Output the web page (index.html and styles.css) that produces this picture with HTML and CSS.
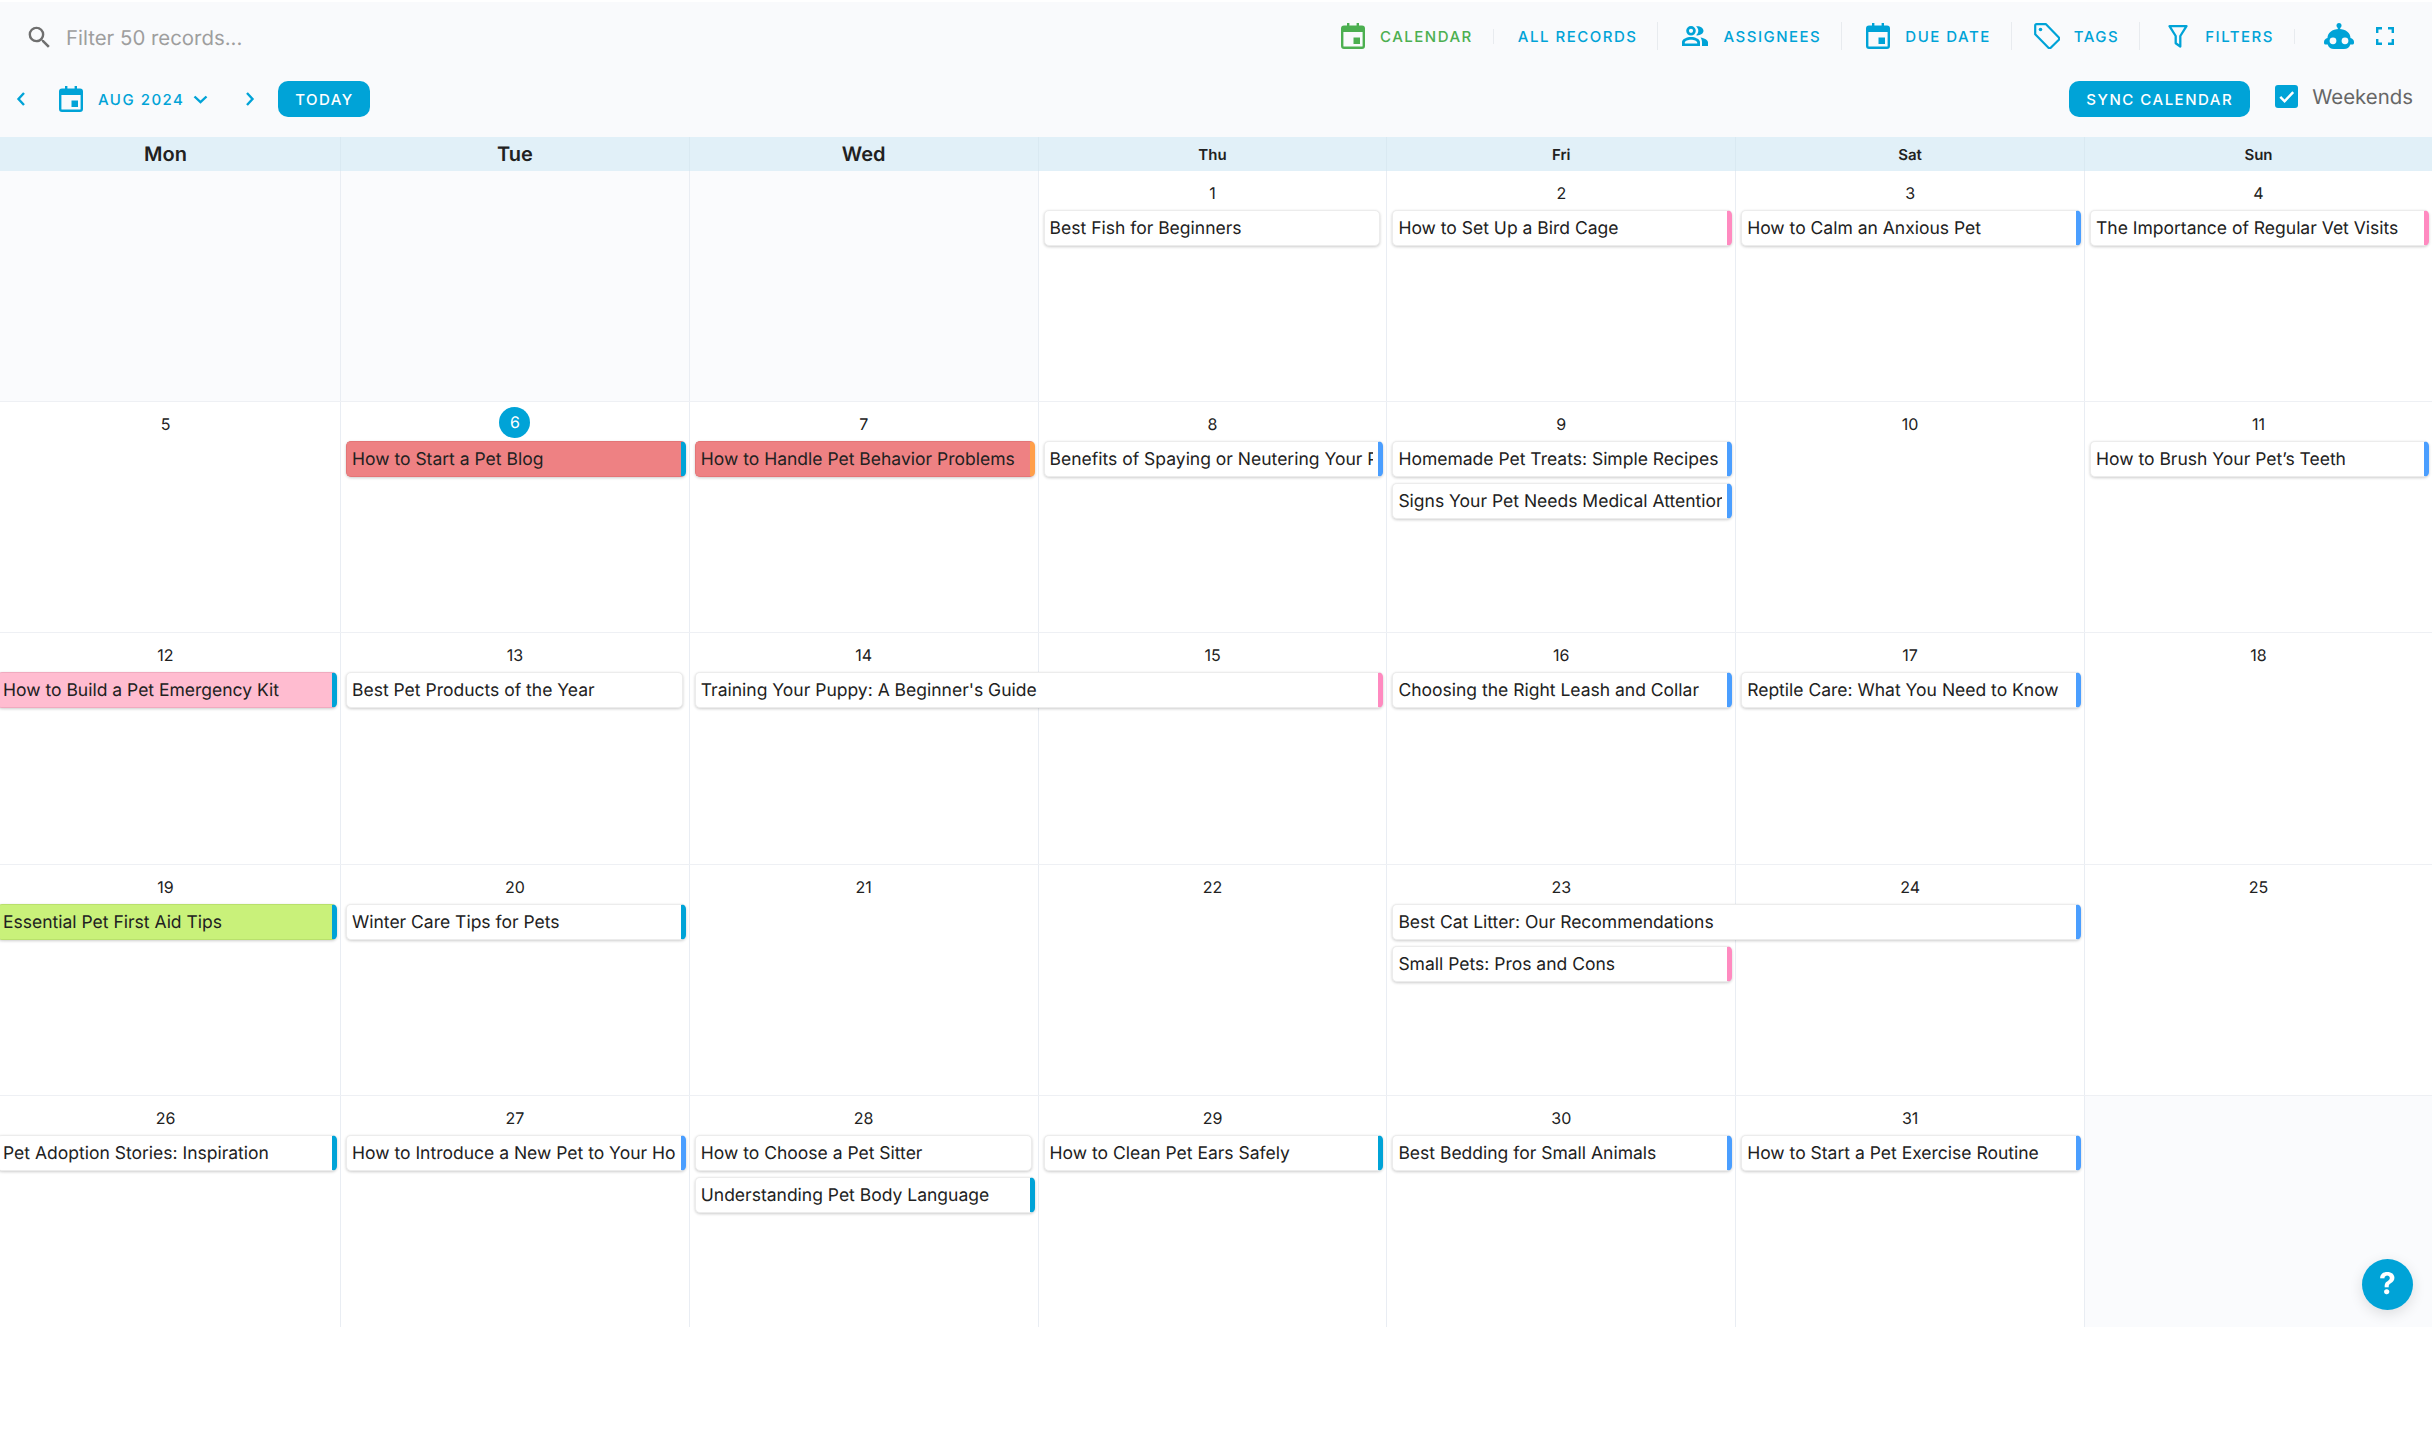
FILE: index.html
```html
<!DOCTYPE html>
<html lang="en">
<head>
  <meta charset="UTF-8">
  <title>Calendar</title>
  <link rel="stylesheet" href="styles.css">
</head>
<body>
<div class="toolbar">
  <div class="nav-row">
    <svg class="search-icon" viewBox="0 0 24 24"><path d="M15.500 14h-.79l-.28-.27A6.470 6.470 0 0 0 16 9.500 6.500 6.500 0 1 0 9.500 16c1.610 0 3.090-.59 4.230-1.570l.27.28v.79l5 4.990L20.490 19l-4.990-5zm-6 0C7.010 14 5 11.990 5 9.500S7.010 5 9.500 5 14 7.010 14 9.500 11.990 14 9.500 14z"/></svg>
    <span class="search-text">Filter 50 records...</span>
    <div class="nav-items">
      <a class="nav-item active">
        <svg class="icon-cal" viewBox="0 0 24 26"><path d="M6 0h2.400v2.600h7.200V0H18v2.600h3a3 3 0 0 1 3 3V23a3 3 0 0 1-3 3H3a3 3 0 0 1-3-3V5.600a3 3 0 0 1 3-3h3zM2.400 9v14c0 .4.200.6.600.6h18c.4 0 .6-.2.6-.6V9zM12.500 14.500H19V21h-6.500z"/></svg>
        CALENDAR
      </a>
      <span class="sep short"></span>
      <a class="nav-item">ALL RECORDS</a>
      <span class="sep"></span>
      <a class="nav-item">
        <svg class="icon-people" viewBox="0 0 26 20"><path d="M9 0a4.800 4.800 0 1 1 0 9.600A4.800 4.800 0 0 1 9 0zm0 2.700a2.100 2.100 0 1 0 0 4.200 2.100 2.100 0 0 0 0-4.200zM9 11c4 0 9 2 9 5v4H0v-4c0-3 5-5 9-5zm0 2.800c-3 0-6.200 1.400-6.200 2.600v1h12.400v-1c0-1.200-3.200-2.600-6.200-2.600zM14 .2c4-.5 7.500 1.600 7.500 4.600S18 9.800 14 9.300c1.500-1.300 2.300-2.800 2.300-4.500S15.500 1.500 14 .2zM18.500 11.500c4 .6 7.500 2.400 7.500 5V20h-6v-3.500c0-2-.6-3.700-1.500-5z"/></svg>
        ASSIGNEES
      </a>
      <span class="sep"></span>
      <a class="nav-item">
        <svg class="icon-cal" viewBox="0 0 24 26"><path d="M6 0h2.400v2.600h7.200V0H18v2.600h3a3 3 0 0 1 3 3V23a3 3 0 0 1-3 3H3a3 3 0 0 1-3-3V5.600a3 3 0 0 1 3-3h3zM2.400 9v14c0 .4.200.6.600.6h18c.4 0 .6-.2.6-.6V9zM12.500 14.500H19V21h-6.500z"/></svg>
        DUE DATE
      </a>
      <span class="sep"></span>
      <a class="nav-item">
        <svg class="icon-tag" viewBox="0 0 26 26"><path d="M2.500 1.200h9.500l12.600 13.100a2 2 0 0 1 0 2.700l-7.600 7.500a2 2 0 0 1-2.800 0L1.200 11.300V2.500c0-.8.500-1.300 1.300-1.300z" fill="none" stroke="currentColor" stroke-width="2.200" stroke-linejoin="round"/><circle cx="6.500" cy="6.500" r="1.800"/></svg>
        TAGS
      </a>
      <span class="sep"></span>
      <a class="nav-item">
        <svg class="icon-filter" viewBox="0 0 20 23"><path d="M1.500 1.200h17L12.300 11v10.500l-4.600-3.200V11z" fill="none" stroke="currentColor" stroke-width="2.300" stroke-linejoin="round"/></svg>
        FILTERS
      </a>
      <span class="sep short"></span>
      <svg class="icon-robot" viewBox="0 0 30 26"><circle cx="15" cy="2.500" r="2.500"/><path d="M13.800 4h2.400v4h-2.400z"/><path d="M15 6C8 6 3.500 10 3.500 15 1.500 15.500 0 17 0 19v1c0 .8.600 1.500 1.500 1.500h2.200C4.500 24.500 7 26 10 26h10c3 0 5.500-1.500 6.300-4.500h2.200c.9 0 1.500-.7 1.500-1.500v-1c0-2-1.500-3.500-3.500-4C26.500 10 22 6 15 6z"/><circle cx="9" cy="17.800" r="3.400" fill="#f9fafc"/><circle cx="21" cy="17.800" r="3.400" fill="#f9fafc"/></svg>
      <svg class="icon-full" viewBox="0 0 18 18"><path d="M0 0h6v2.400H2.400V6H0zM12 0h6v6h-2.400V2.400H12zM0 12h2.400v3.600H6V18H0zM15.600 12H18v6h-6v-2.400h3.600z"/></svg>
    </div>
  </div>
  <div class="date-row">
    <svg class="chev-prev" viewBox="0 0 10 14"><path d="M8 1 2.500 7 8 13" fill="none" stroke="currentColor" stroke-width="2.400"/></svg>
    <svg class="icon-cal month-cal" viewBox="0 0 24 26"><path d="M6 0h2.400v2.600h7.200V0H18v2.600h3a3 3 0 0 1 3 3V23a3 3 0 0 1-3 3H3a3 3 0 0 1-3-3V5.600a3 3 0 0 1 3-3h3zM2.400 9v14c0 .4.200.6.600.6h18c.4 0 .6-.2.6-.6V9zM12.500 14.500H19V21h-6.500z"/></svg>
    <span class="month-label">AUG 2024</span>
    <svg class="chev-down" viewBox="0 0 15 9"><path d="M1.500 1.500 7.500 7.200l6-5.700" fill="none" stroke="currentColor" stroke-width="2.400"/></svg>
    <svg class="chev-next" viewBox="0 0 10 14"><path d="M2 1 7.500 7 2 13" fill="none" stroke="currentColor" stroke-width="2.400"/></svg>
    <button class="btn today-btn">TODAY</button>
    <button class="btn sync-btn">SYNC CALENDAR</button>
    <span class="checkbox"><svg viewBox="0 0 24 24"><path d="M5.500 12.500 10 17l9-9.500" fill="none" stroke="#fff" stroke-width="2.600"/></svg></span>
    <span class="weekends">Weekends</span>
  </div>
</div>

<div class="calendar">
  <div class="head-row">
    <div class="head big">Mon</div>
    <div class="head big">Tue</div>
    <div class="head big">Wed</div>
    <div class="head">Thu</div>
    <div class="head">Fri</div>
    <div class="head">Sat</div>
    <div class="head">Sun</div>
  </div>

  <div class="week">
    <div class="day c1 off"></div>
    <div class="day c2 off"></div>
    <div class="day c3 off"></div>
    <div class="day c4">1</div>
    <div class="day c5">2</div>
    <div class="day c6">3</div>
    <div class="day c7">4</div>
    <div class="event c4 r2 plain">Best Fish for Beginners</div>
    <div class="event c5 r2 pink">How to Set Up a Bird Cage</div>
    <div class="event c6 r2 blue">How to Calm an Anxious Pet</div>
    <div class="event c7 r2 pink">The Importance of Regular Vet Visits</div>
  </div>

  <div class="week">
    <div class="day c1">5</div>
    <div class="day c2"><span class="today-num">6</span></div>
    <div class="day c3">7</div>
    <div class="day c4">8</div>
    <div class="day c5">9</div>
    <div class="day c6">10</div>
    <div class="day c7">11</div>
    <div class="event c2 r2 teal bg-red">How to Start a Pet Blog</div>
    <div class="event c3 r2 orange bg-red">How to Handle Pet Behavior Problems</div>
    <div class="event c4 r2 blue">Benefits of Spaying or Neutering Your Pet</div>
    <div class="event c5 r2 blue">Homemade Pet Treats: Simple Recipes</div>
    <div class="event c5 r3 blue">Signs Your Pet Needs Medical Attention</div>
    <div class="event c7 r2 blue">How to Brush Your Pet’s Teeth</div>
  </div>

  <div class="week">
    <div class="day c1">12</div>
    <div class="day c2">13</div>
    <div class="day c3">14</div>
    <div class="day c4">15</div>
    <div class="day c5">16</div>
    <div class="day c6">17</div>
    <div class="day c7">18</div>
    <div class="event c1 r2 teal bg-pink">How to Build a Pet Emergency Kit</div>
    <div class="event c2 r2 plain">Best Pet Products of the Year</div>
    <div class="event c3 span2 r2 pink">Training Your Puppy: A Beginner's Guide</div>
    <div class="event c5 r2 blue">Choosing the Right Leash and Collar</div>
    <div class="event c6 r2 blue">Reptile Care: What You Need to Know</div>
  </div>

  <div class="week">
    <div class="day c1">19</div>
    <div class="day c2">20</div>
    <div class="day c3">21</div>
    <div class="day c4">22</div>
    <div class="day c5">23</div>
    <div class="day c6">24</div>
    <div class="day c7">25</div>
    <div class="event c1 r2 teal bg-green">Essential Pet First Aid Tips</div>
    <div class="event c2 r2 teal">Winter Care Tips for Pets</div>
    <div class="event c5 span2 r2 blue">Best Cat Litter: Our Recommendations</div>
    <div class="event c5 r3 pink">Small Pets: Pros and Cons</div>
  </div>

  <div class="week last">
    <div class="day c1">26</div>
    <div class="day c2">27</div>
    <div class="day c3">28</div>
    <div class="day c4">29</div>
    <div class="day c5">30</div>
    <div class="day c6">31</div>
    <div class="day c7 off"></div>
    <div class="event c1 r2 teal">Pet Adoption Stories: Inspiration</div>
    <div class="event c2 r2 blue">How to Introduce a New Pet to Your Home</div>
    <div class="event c3 r2 plain">How to Choose a Pet Sitter</div>
    <div class="event c3 r3 teal">Understanding Pet Body Language</div>
    <div class="event c4 r2 teal">How to Clean Pet Ears Safely</div>
    <div class="event c5 r2 blue">Best Bedding for Small Animals</div>
    <div class="event c6 r2 blue">How to Start a Pet Exercise Routine</div>
  </div>
</div>

<div class="help-btn">?</div>
</body>
</html>
```

FILE: styles.css
```css
* { box-sizing: border-box; }
html, body {
  margin: 0;
  padding: 0;
  height: 100%;
  background: #fff;
  overflow: hidden;
}
body {
  font-family: Inter, 'Liberation Sans', sans-serif;
  color: #212121;
  text-rendering: geometricPrecision;
}
svg {
  display: block;
  fill: currentColor;
  fill-rule: evenodd;
  flex: none;
}

.toolbar {
  margin-top: 2px;
  height: 135px;
  background: #f9fafc;
  color: #00a3d7;
}
.nav-row {
  height: 68px;
  display: flex;
  align-items: center;
  padding-left: 25px;
}
.search-icon {
  width: 29px;
  height: 29px;
  margin-top: 2px;
  color: #6f6f6f;
}
.search-text {
  margin-left: 12px;
  margin-top: 2px;
  font-size: 20.400px;
  color: #9e9e9e;
}
.nav-items {
  margin-left: auto;
  display: flex;
  align-items: center;
  padding-right: 38px;
}
.nav-item {
  display: flex;
  align-items: center;
  font-size: 15px;
  font-weight: 500;
  letter-spacing: 1.500px;
}
.nav-item.active {
  color: #4caf50;
}
.sep {
  width: 1px;
  height: 28px;
  margin: 0 24px 0 20px;
  background: #e8ebef;
}
.sep.short {
  height: 15px;
}
.icon-cal {
  width: 24px;
  height: 26px;
  margin-right: 15px;
}
.icon-people {
  width: 26px;
  height: 20px;
  margin-right: 15px;
}
.icon-tag {
  width: 26px;
  height: 26px;
  margin-left: -2px;
  margin-right: 14px;
}
.icon-filter {
  width: 20px;
  height: 23px;
  margin-left: 4px;
  margin-right: 17px;
}
.icon-robot {
  width: 30px;
  height: 26px;
  margin-left: 5px;
}
.icon-full {
  width: 18px;
  height: 18px;
  margin-left: 22px;
}

.date-row {
  height: 36px;
  margin-top: 11px;
  display: flex;
  align-items: center;
  padding-left: 16px;
  padding-right: 19px;
}
.chev-prev, .chev-next {
  width: 10px;
  height: 14px;
}
.month-cal {
  margin-left: 33px;
  margin-right: 15px;
}
.month-label {
  font-size: 15px;
  font-weight: 500;
  letter-spacing: 1.500px;
}
.chev-down {
  width: 15px;
  height: 9px;
  margin-left: 9px;
}
.chev-next {
  margin-left: 37px;
}
.btn {
  height: 36px;
  border: none;
  border-radius: 10px;
  background: #00a3d7;
  color: #fff;
  font-family: inherit;
  font-size: 15px;
  font-weight: 500;
  letter-spacing: 1.500px;
  padding: 0;
}
.today-btn {
  width: 92px;
  margin-left: 23px;
}
.sync-btn {
  width: 181px;
  margin-left: auto;
}
.checkbox {
  align-self: flex-start;
  width: 23px;
  height: 23px;
  margin-top: 4px;
  margin-left: 25px;
  border-radius: 3px;
  background: #00a3d7;
}
.weekends {
  align-self: flex-start;
  margin-top: 3px;
  margin-left: 14px;
  font-size: 20.400px;
  color: #666;
}

.head-row {
  display: grid;
  grid-template-columns: 340px repeat(5, 348.800px) 1fr;
  height: 34px;
  background: #e1f0f8;
}
.head {
  display: flex;
  align-items: center;
  justify-content: center;
  font-size: 15px;
  font-weight: 600;
  border-left: 1px solid #d9e9f2;
}
.head:first-child {
  border-left: none;
  padding-right: 9px;
}
.head.big {
  font-size: 20px;
}

.week {
  display: grid;
  grid-template-columns: 340px repeat(5, 348.800px) 1fr;
  grid-template-rows: 39px 42px 42px 1fr;
  height: 231.200px;
  border-bottom: 1px solid #eef0f4;
}
.week.last {
  border-bottom: none;
}
.day {
  grid-row: 1 / -1;
  padding-top: 12px;
  text-align: center;
  font-size: 16px;
  line-height: 20px;
  border-left: 1px solid #e9edf3;
}
.day.c1 {
  border-left: none;
  padding-right: 9px;
}
.day.off {
  background: #fafbfd;
}
.today-num {
  display: block;
  width: 31px;
  height: 31px;
  margin: -7px auto 0;
  border-radius: 50%;
  background: #00a3d7;
  color: #fff;
  line-height: 31px;
}

.c1 { grid-column-start: 1; }
.c2 { grid-column-start: 2; }
.c3 { grid-column-start: 3; }
.c4 { grid-column-start: 4; }
.c5 { grid-column-start: 5; }
.c6 { grid-column-start: 6; }
.c7 { grid-column-start: 7; }
.span2 { grid-column-end: span 2; }
.r2 { grid-row-start: 2; }
.r3 { grid-row-start: 3; }

.event {
  height: 36px;
  margin: 0 3px 0 6px;
  padding: 0 5px;
  background: #fff;
  border: 1px solid #ececec;
  border-radius: 5px;
  box-shadow: 0 1px 3px rgba(0, 0, 0, 0.2);
  font-size: 17.500px;
  line-height: 36px;
  white-space: nowrap;
  overflow: clip;
  overflow-clip-margin: content-box;
}
.event.c1 {
  margin-left: -3px;
}
.event.plain {
  margin-right: 6px;
}
.event.bg-red { background: #ee8183; border-color: #e37577; }
.event.bg-pink { background: #ffbcd0; border-color: #f0aabf; }
.event.bg-green { background: #c9f17a; border-color: #b9e06c; }
.event.teal { border-right: 5px solid #00a3d7; }
.event.blue { border-right: 5px solid #4a9eff; }
.event.pink { border-right: 5px solid #ff8ac0; }
.event.orange { border-right: 5px solid #ff9f4a; }

.help-btn {
  position: fixed;
  left: 2362px;
  top: 1259px;
  width: 51px;
  height: 51px;
  border-radius: 50%;
  background: #00a3d7;
  box-shadow: 0 4px 14px rgba(0, 0, 0, 0.12);
  color: #fff;
  font-size: 30px;
  font-weight: 700;
  line-height: 51px;
  text-align: center;
}
```
